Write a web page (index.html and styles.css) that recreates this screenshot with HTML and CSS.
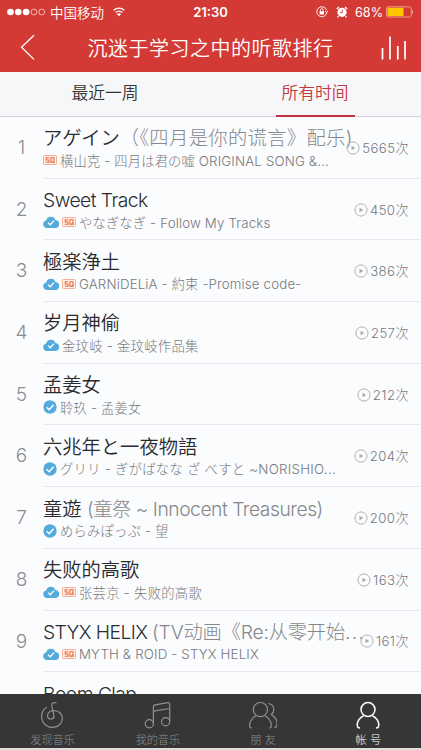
FILE: index.html
```html
<!DOCTYPE html>
<html lang="zh-CN">
<head>
<meta charset="utf-8">
<title>听歌排行</title>
<link rel="stylesheet" href="styles.css">
</head>
<body>
<svg width="0" height="0" class="defs">
  <symbol id="cloud" viewBox="0 0 16 12"><path d="M4 12A3.8 3.8 0 0 1 3.2 4.5A4.8 4.8 0 0 1 12.4 4A4 4 0 0 1 12 12Z" fill="#54aadb"/><path d="M5 6.6L7.2 8.8L11 4.6" fill="none" stroke="#fff" stroke-width="1.3"/></symbol>
  <symbol id="check" viewBox="0 0 14 14"><circle cx="7" cy="7" r="6.7" fill="#54aadb"/><path d="M3.6 7.2L6.2 9.7L10.6 4.7" fill="none" stroke="#fff" stroke-width="1.4"/></symbol>
  <symbol id="sq" viewBox="0 0 14 10"><rect x=".5" y=".5" width="13" height="9" rx=".8" fill="#fff0e9" stroke="#f3a080" stroke-width=".8"/><path d="M6.2 2.8H3.2V5H6V7.3H2.8M8 2.8H11V7.3H8ZM9.8 6L11.5 8" fill="none" stroke="#e96a3d" stroke-width="1.1"/></symbol>
  <symbol id="play" viewBox="0 0 14 14"><circle cx="7" cy="7" r="6.1" fill="none" stroke="#b0b1b3"/><path d="M5.5 4.8L9.3 7L5.5 9.2Z" fill="#aaabad"/></symbol>
</svg>
<div class="screen">
  <header>
    <div class="status">
      <div class="carrier">
        <svg width="39" height="8" viewBox="0 0 39 8"><g fill="#fff"><circle cx="3.5" cy="4" r="3.3"/><circle cx="11.3" cy="4" r="3.3"/><circle cx="19.1" cy="4" r="3.3"/></g><g fill="none" stroke="#ffd5cf" stroke-width=".8"><circle cx="26.9" cy="4" r="2.9"/><circle cx="34.7" cy="4" r="2.9"/></g></svg>
        <span>中国移动</span>
        <svg class="wifi" width="12" height="10" viewBox="0 0 12 10"><path d="M.6 3.3Q6-1.2 11.4 3.3M2.6 5.5Q6 2.7 9.4 5.5" fill="none" stroke="#fff" stroke-width="1.3"/><path d="M3.9 7Q6 5.3 8.1 7L6 9.3Z" fill="#fff"/></svg>
      </div>
      <time>21:30</time>
      <div class="power">
        <svg width="12" height="12" viewBox="0 0 12 12"><path d="M10.7 7A5 5 0 1 1 10.6 4.2M9 5.2L10.9 6.6L12 4.8" fill="none" stroke="#fff" stroke-width=".9"/><rect x="3.6" y="5.2" width="4.4" height="3.3" fill="#fff"/><path d="M4.4 5.4V4A1.4 1.4 0 0 1 7.2 4V5.4" fill="none" stroke="#fff" stroke-width=".8"/></svg>
        <svg class="alarm" width="12" height="12" viewBox="0 0 12 12"><circle cx="6" cy="6.3" r="4.6" fill="#fff"/><path d="M.8 3L3 1M11.2 3L9 1M2.6 10.2L1.5 11.4M9.4 10.2L10.5 11.4" stroke="#fff" stroke-width="1.3"/><path d="M6.3 3.5V6.6H4" fill="none" stroke="#d43a35" stroke-width=".9"/></svg>
        <span>68%</span>
        <svg width="28" height="12" viewBox="0 0 28 12"><rect x=".5" y=".8" width="24.8" height="10.2" rx="1.8" fill="none" stroke="#f5aa91" stroke-width=".9"/><rect x="1.5" y="1.8" width="16" height="8.2" rx=".5" fill="#ffc600"/><path d="M26.3 4Q28 6 26.3 8Z" fill="#ffd9d0"/></svg>
      </div>
    </div>
    <div class="nav">
      <svg width="16" height="27" viewBox="0 0 16 27"><path d="M14 1.2L1.5 13.2L14 25.4" fill="none" stroke="#fff" stroke-width="1.3"/></svg>
      <h1>沉迷于学习之中的听歌排行</h1>
      <svg width="27" height="27" viewBox="0 0 27 27"><path d="M2.5 14V25.5M10 2.5V25.5M17.8 12V25.5M25 7V25.5" fill="none" stroke="#fff" stroke-width="1.7"/></svg>
    </div>
  </header>
  <nav class="tabs"><div class="tab"><span>最近一周</span></div><div class="tab on"><span>所有时间</span></div></nav>
  <main>
    <article><b class="rank">1</b><div class="song"><h2 class="t1">アゲイン<i>（《四月是你的谎言》配乐)</i></h2><p class="s1"><svg class="sq"><use href="#sq"/></svg><span>横山克 - 四月は君の嘘 ORIGINAL SONG &amp;...</span></p></div><div class="plays"><svg><use href="#play"/></svg>5665次</div></article>
    <article><b class="rank">2</b><div class="song"><h2 class="t2">Sweet Track</h2><p class="s2"><svg class="cloud"><use href="#cloud"/></svg><svg class="sq"><use href="#sq"/></svg><span>やなぎなぎ - Follow My Tracks</span></p></div><div class="plays"><svg><use href="#play"/></svg>450次</div></article>
    <article><b class="rank">3</b><div class="song"><h2>極楽浄土</h2><p class="s3"><svg class="cloud"><use href="#cloud"/></svg><svg class="sq"><use href="#sq"/></svg><span>GARNiDELiA - 約束 -Promise code-</span></p></div><div class="plays"><svg><use href="#play"/></svg>386次</div></article>
    <article><b class="rank">4</b><div class="song"><h2>岁月神偷</h2><p class="s4"><svg class="cloud"><use href="#cloud"/></svg><span>金玟岐 - 金玟岐作品集</span></p></div><div class="plays"><svg><use href="#play"/></svg>257次</div></article>
    <article><b class="rank">5</b><div class="song"><h2>孟姜女</h2><p class="s5"><svg class="check"><use href="#check"/></svg><span>聆玖 - 孟姜女</span></p></div><div class="plays"><svg><use href="#play"/></svg>212次</div></article>
    <article><b class="rank">6</b><div class="song"><h2>六兆年と一夜物語</h2><p class="s6"><svg class="check"><use href="#check"/></svg><span>グリリ - ぎがばなな ざ べすと ~NORISHIO...</span></p></div><div class="plays"><svg><use href="#play"/></svg>204次</div></article>
    <article><b class="rank">7</b><div class="song"><h2 class="t7">童遊 <i>(童祭 ~ Innocent Treasures)</i></h2><p class="s7"><svg class="check"><use href="#check"/></svg><span>めらみぽっぷ - 望</span></p></div><div class="plays"><svg><use href="#play"/></svg>200次</div></article>
    <article><b class="rank">8</b><div class="song"><h2>失败的高歌</h2><p class="s8"><svg class="cloud"><use href="#cloud"/></svg><svg class="sq"><use href="#sq"/></svg><span>张芸京 - 失败的高歌</span></p></div><div class="plays"><svg><use href="#play"/></svg>163次</div></article>
    <article><b class="rank">9</b><div class="song"><h2 class="t9">STYX HELIX <i>(TV动画《Re:从零开始<em>...</em></i></h2><p class="s9"><svg class="cloud"><use href="#cloud"/></svg><svg class="sq"><use href="#sq"/></svg><span>MYTH &amp; ROID - STYX HELIX</span></p></div><div class="plays"><svg><use href="#play"/></svg>161次</div></article>
    <article><b class="rank"></b><div class="song"><h2 class="t10">Boom Clap</h2></div></article>
  </main>
  <footer>
    <div><svg class="disc" width="28" height="28" viewBox="0 0 28 28"><path d="M19.4 2.2C16.8.6 14.4 2.1 14.8 4.6L17 15C17.4 18.3 11.6 19.4 10.6 15.6C9.8 11.7 13.5 9.6 16.7 9.7C25.6 10 27.2 18.3 23.2 23A10.8 10.8 0 1 1 9.8 6.3"/></svg><span>发现音乐</span></div>
    <div><svg width="28" height="28" viewBox="0 0 28 28"><circle cx="5.3" cy="22.8" r="4.1"/><circle cx="21.6" cy="20.7" r="4.1"/><path d="M9.4 22.8V6Q9.4 4.2 11 3.9L24 1.7Q25.7 1.5 25.7 3V20.7M9.4 10.2L25.7 7.5"/></svg><span>我的音乐</span></div>
    <div><svg width="28" height="28" viewBox="0 0 28 28"><circle cx="11.4" cy="8.6" r="7.1"/><path d="M7 14.9C2.3 17 0 22 .8 25.8Q1 27 3 27M16 14.9C20.6 17 23 22 22.1 25.8Q21.8 27 20 27M19.5 2.5C25 3.2 26.5 9.8 22.4 13.7C27.8 17 28.6 22 27.6 25.4Q27 26.5 25.2 26.2"/></svg><span>朋 友</span></div>
    <div class="active"><svg width="28" height="28" viewBox="0 0 28 28"><circle cx="14" cy="8.6" r="7"/><path d="M9.6 14.7C4.5 17 2.5 22 3.5 25.8Q3.8 27 6 27M18.4 14.7C23.5 17 25.5 22 24.5 25.8Q24.2 27 22 27"/></svg><span>帐 号</span></div>
  </footer>
</div>
</body>
</html>
```
FILE: styles.css
```css
* { box-sizing: border-box; margin: 0; padding: 0; }
body { width: 421px; height: 750px; overflow: hidden; background: #fafafa; font-family: Inter, "Noto Sans CJK SC", sans-serif; }
.defs { position: absolute; }
svg { flex: none; display: block; }
.screen { height: 750px; display: flex; flex-direction: column; background: #fbfcfe; }
header { height: 72px; background: #d43a35; color: #fff; flex: none; }
.status { height: 24px; display: grid; grid-template-columns: 1fr auto 1fr; align-items: center; padding: 0 7px; font-size: 13px; }
.carrier, .power { display: flex; align-items: center; }
.carrier span { margin-left: 4px; font-size: 13.5px; font-weight: 350; }
.wifi { margin-left: 9px; }
.power { justify-content: flex-end; }
.power span { margin: 0 3px 0 7px; font-size: 12.6px; }
.alarm { margin-left: 8px; }
time { font-weight: 600; }
.nav { height: 48px; display: grid; grid-template-columns: 28px 1fr 28px; align-items: center; padding: 0 13px 2px 20px; }
.nav h1 { text-align: center; padding-right: 7px; font-size: 20px; letter-spacing: .5px; font-weight: 350; white-space: nowrap; }
.tabs { height: 45px; flex: none; display: flex; background: #f6f7f9; border-bottom: 1px solid #d2d4d7; color: #333; font-size: 16.8px; padding-right: 1px; }
.tab { flex: 1; display: flex; justify-content: center; }
.tab span { width: 79px; text-align: center; line-height: 42px; height: 45px; white-space: nowrap; font-weight: 350; }
.tab.on span { color: #c73640; border-bottom: 2px solid #bd3341; }
main { flex: 1; min-height: 0; overflow: hidden; }
article { height: 61.7px; display: grid; grid-template-columns: 43px 1fr auto; padding-right: 12px; }
.rank { font-weight: 300; color: #8b8c8f; font-size: 19px; text-align: center; line-height: 61px; }
.song { border-bottom: 1px solid #e7e9ec; min-width: 0; margin-right: -12px; grid-column: 2 / 4; grid-row: 1; padding-top: 7.4px; }
.song h2 { color: #292b2e; font-size: 19.3px; line-height: 28px; font-weight: 350; white-space: nowrap; }
.song h2 i { color: #85878a; font-style: normal; font-weight: 300; }
.song p { display: flex; align-items: center; height: 16px; gap: 3px; font-size: 13.3px; font-weight: 300; color: #77797c; white-space: nowrap; }
.song .t1 i { letter-spacing: .35px; }
.song .t2, .song .t10 { letter-spacing: -.55px; }
.song .t7 i { letter-spacing: -.48px; }
.song .t9 { letter-spacing: -.6px; }
.song .t9 i { letter-spacing: -.2px; }
.song .t9 em { font-style: normal; letter-spacing: 1.3px; }
.s1, .s2, .s3, .s9 { letter-spacing: .15px; }
.s4, .s6, .s8 { letter-spacing: .28px; }
.s5, .s7 { letter-spacing: .2px; }
.cloud { width: 16px; height: 12px; }
.check { width: 14px; height: 14px; }
.sq { width: 14px; height: 10px; }
.plays { grid-column: 3; grid-row: 1; display: flex; align-items: center; gap: 2px; font-size: 13.2px; line-height: 18px; color: #77797c; font-weight: 300; letter-spacing: .4px; }
.plays svg { width: 14px; height: 14px; }
footer { height: 56px; flex: none; display: grid; grid-template-columns: repeat(4, 1fr); background: #363636; border-bottom: 2px solid #dedede; }
footer div { display: flex; flex-direction: column; align-items: center; padding-top: 7px; color: #909090; }
footer svg { fill: none; stroke: currentColor; stroke-width: 1.2; }
footer .disc { margin-right: 4px; }
footer span { margin-top: 3px; font-size: 11.2px; line-height: 16px; font-weight: 300; white-space: nowrap; }
footer .active { color: #fff; }
footer .active svg { stroke-width: 1.5; }
```
